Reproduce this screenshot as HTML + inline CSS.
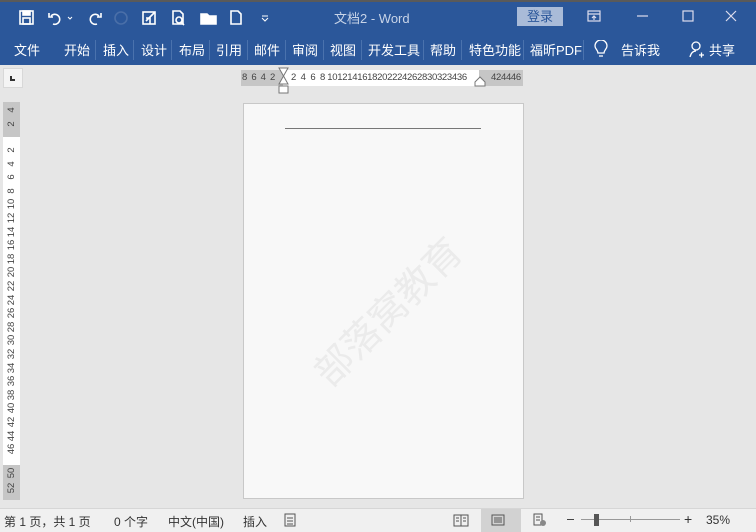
<!DOCTYPE html>
<html><head><meta charset="utf-8"><style>
*{margin:0;padding:0;box-sizing:border-box}
body{width:756px;height:532px;overflow:hidden;background:#e6e6e6;font-family:"Liberation Sans","Noto Sans CJK SC",sans-serif;position:relative}
.a{position:absolute}
#top{left:0;top:0;width:756px;height:65px;background:#2b579a;border-top:2px solid #5a5a5a}
.t{color:#fff;font-size:13px;top:40px;white-space:nowrap}
.sep{top:40px;width:1px;height:20px;background:#4a72ad}
.w{color:#fff}
.r{font-size:9.5px;color:#444;letter-spacing:-0.3px}
.v{position:absolute;left:2px;width:20px;height:12px;line-height:12px;text-align:center;font-size:9.5px;color:#444;transform:rotate(-90deg);white-space:nowrap}
.st{font-size:12px;color:#333;top:513px;white-space:nowrap}
</style></head><body>
<div id="top" class="a"></div>
<svg class="a" style="left:16px;top:8px" width="260" height="20" fill="none" stroke="#fff" stroke-width="1.6">
<rect x="4" y="3" width="13" height="13"/><rect x="7" y="3" width="7" height="4" fill="#fff"/><rect x="7" y="10" width="7" height="6"/>
<path d="M35 8a5 5 0 1 1 2 8M33 5v4h4"/><path d="M52 9l2 2 2-2" stroke-width="1"/>
<path d="M83 8a5 5 0 1 0-2 8M85 5v4h-4"/>
<circle cx="105" cy="10" r="6" stroke="#4a6fa8"/>
<rect x="127" y="4" width="12" height="12"/><path d="M130 13l9-9M130 10h4v6"/>
<path d="M157 3h7l3 3v10h-10z"/><circle cx="163" cy="12" r="3"/><path d="M165 14l3 3"/>
<path d="M185 6h6l2 2h7v8h-15z" fill="#fff"/>
<path d="M215 3h7l3 3v10h-10z"/>
<path d="M246 8h6M246 10l3 3 3-3" stroke-width="1"/>
</svg>
<div class="a w" style="left:334px;top:8px;font-size:13px;color:#c8d4e8">文档2 - Word</div>
<div class="a" style="left:517px;top:7px;width:46px;height:19px;background:#a9bbd8;color:#2b579a;font-size:13px;text-align:center;line-height:19px">登录</div>
<svg class="a" style="left:585px;top:8px" width="160" height="16" fill="none" stroke="#dde" stroke-width="1.2">
<rect x="3" y="3" width="12" height="10"/><path d="M3 6h12M9 12V8M7 10l2-2 2 2"/>
<path d="M52 8h11"/><rect x="98" y="3" width="10" height="10"/><path d="M141 3l10 10M151 3l-10 10"/>
</svg>
<div class="a t" style="left:14px">文件</div>
<div class="a t" style="left:64px">开始</div><div class="a sep" style="left:95px"></div>
<div class="a t" style="left:103px">插入</div><div class="a sep" style="left:133px"></div>
<div class="a t" style="left:141px">设计</div><div class="a sep" style="left:171px"></div>
<div class="a t" style="left:179px">布局</div><div class="a sep" style="left:209px"></div>
<div class="a t" style="left:216px">引用</div><div class="a sep" style="left:247px"></div>
<div class="a t" style="left:254px">邮件</div><div class="a sep" style="left:285px"></div>
<div class="a t" style="left:292px">审阅</div><div class="a sep" style="left:323px"></div>
<div class="a t" style="left:330px">视图</div><div class="a sep" style="left:361px"></div>
<div class="a t" style="left:368px">开发工具</div><div class="a sep" style="left:423px"></div>
<div class="a t" style="left:430px">帮助</div><div class="a sep" style="left:461px"></div>
<div class="a t" style="left:469px">特色功能</div><div class="a sep" style="left:523px"></div>
<div class="a t" style="left:530px">福昕PDF</div><div class="a sep" style="left:583px"></div>
<svg class="a" style="left:594px;top:40px" width="14" height="20" fill="none" stroke="#fff" stroke-width="1.3"><path d="M4 13c0-3-3-4-3-7a6 6 0 0 1 12 0c0 3-3 4-3 7zM5 16h4"/></svg>
<div class="a t" style="left:621px">告诉我</div>
<svg class="a" style="left:689px;top:40px" width="16" height="20" fill="none" stroke="#fff" stroke-width="1.3"><circle cx="7" cy="6" r="4"/><path d="M1 17c1-4 3-6 6-6M10 15h5M12.5 12.5v5"/></svg>
<div class="a t" style="left:709px">共享</div>
<div class="a" style="left:3px;top:68px;width:20px;height:20px;background:#f4f4f4;border:1px solid #d8d8d8"></div>
<div class="a" style="left:10px;top:76px;width:5px;height:5px;border-left:2px solid #333;border-bottom:2px solid #333"></div>
<div class="a" style="left:241px;top:70px;width:42px;height:16px;background:#c6c6c6"></div>
<div class="a" style="left:283px;top:70px;width:196px;height:16px;background:#fff"></div>
<div class="a" style="left:479px;top:70px;width:44px;height:16px;background:#c6c6c6"></div>
<div class="a r" style="left:242px;top:72px;letter-spacing:0.2px;word-spacing:1px">8 6 4 2</div>
<div class="a r" style="left:291px;top:72px">2 &nbsp;4 &nbsp;6 &nbsp;8 1012141618202224262830323436</div>
<div class="a r" style="left:491px;top:72px">424446</div>
<svg class="a" style="left:278px;top:67px" width="12" height="28" fill="#fff" stroke="#777"><path d="M1 1h9L5.5 9zM5.5 9L10 17H1z"/><rect x="1" y="19" width="9" height="7"/></svg>
<svg class="a" style="left:474px;top:76px" width="12" height="11" fill="#fff" stroke="#777"><path d="M1 10V6l5-5 5 5v4z"/></svg>
<div class="a" style="left:3px;top:102px;width:17px;height:35px;background:#c6c6c6"></div>
<div class="a" style="left:3px;top:137px;width:17px;height:328px;background:#fff"></div>
<div class="a" style="left:3px;top:465px;width:17px;height:35px;background:#c6c6c6"></div>
<div class="v" style="top:104px">4</div>
<div class="v" style="top:118px">2</div>
<div class="v" style="top:144px">2</div>
<div class="v" style="top:158px">4</div>
<div class="v" style="top:171px">6</div>
<div class="v" style="top:185px">8</div>
<div class="v" style="top:198px">10</div>
<div class="v" style="top:212px">12</div>
<div class="v" style="top:226px">14</div>
<div class="v" style="top:239px">16</div>
<div class="v" style="top:253px">18</div>
<div class="v" style="top:266px">20</div>
<div class="v" style="top:280px">22</div>
<div class="v" style="top:294px">24</div>
<div class="v" style="top:307px">26</div>
<div class="v" style="top:321px">28</div>
<div class="v" style="top:334px">30</div>
<div class="v" style="top:348px">32</div>
<div class="v" style="top:362px">34</div>
<div class="v" style="top:375px">36</div>
<div class="v" style="top:389px">38</div>
<div class="v" style="top:402px">40</div>
<div class="v" style="top:416px">42</div>
<div class="v" style="top:430px">44</div>
<div class="v" style="top:443px">46</div>
<div class="v" style="top:467px">50</div>
<div class="v" style="top:482px">52</div>
<div class="a" style="left:243px;top:103px;width:281px;height:396px;background:#f8f8f8;border:1px solid #c8c8c8"></div>
<div class="a" style="left:285px;top:128px;width:196px;height:1px;background:#777"></div>
<div class="a" style="left:276px;top:282px;width:220px;font-size:38px;color:#ebebeb;transform:rotate(-45deg);white-space:nowrap;text-align:center">部落窝教育</div>
<div class="a" style="left:0;top:508px;width:756px;height:24px;background:#f0f0f0;border-top:1px solid #d6d6d6"></div>
<div class="a" style="left:481px;top:509px;width:40px;height:23px;background:#d2d2d2"></div>
<div class="a st" style="left:4px">第 1 页，共 1 页</div>
<div class="a st" style="left:114px">0 个字</div>
<div class="a st" style="left:168px">中文(中国)</div>
<div class="a st" style="left:243px">插入</div>
<svg class="a" style="left:283px;top:512px" width="300" height="16" fill="none" stroke="#555">
<rect x="2" y="2" width="10" height="12"/><path d="M4 6h6M4 9h6M4 12h6"/>
<path d="M171 3h14v11h-14zM178 3v11M173 6h3M173 9h3M180 6h3M180 9h3"/>
<rect x="209" y="3" width="12" height="10"/><path d="M211 6h8M211 8h8M211 10h8"/>
<path d="M251 2h8v11h-8zM253 5h4M253 8h4"/><circle cx="260" cy="11" r="3" fill="#888" stroke="none"/>
</svg>
<div class="a" style="left:567px;top:519px;width:7px;height:1px;background:#444"></div>
<div class="a" style="left:581px;top:519px;width:99px;height:1px;background:#999"></div>
<div class="a" style="left:630px;top:516px;width:1px;height:6px;background:#999"></div>
<div class="a" style="left:594px;top:514px;width:5px;height:12px;background:#555"></div>
<div class="a st" style="left:684px;top:511px;font-size:14px">+</div>
<div class="a st" style="left:706px">35%</div>
</body></html>
